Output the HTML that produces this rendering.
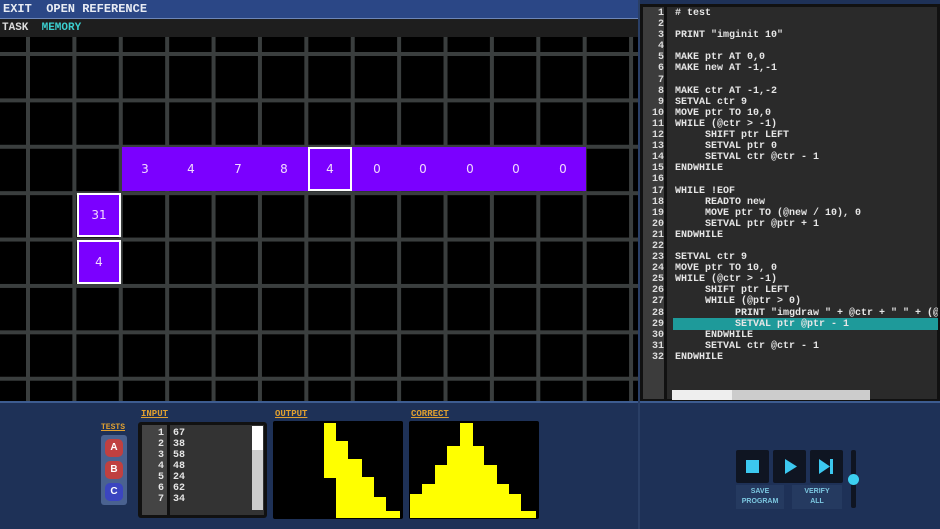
<!DOCTYPE html>
<html><head><style>
*{margin:0;padding:0;box-sizing:border-box}
body{width:940px;height:529px;overflow:hidden;background:#1e3157;font-family:"Liberation Mono",monospace;position:relative}
.abs{position:absolute}
#top{left:0;top:0;width:638px;height:19px;background:#2b4786;border-bottom:1px solid #6d86b8;color:#e8ecf4;font-size:12px;line-height:19px;padding-left:3px;font-weight:bold}
#task{left:0;top:19px;width:638px;height:18px;background:#1e1e1e;color:#ddd;font-size:11px;line-height:18px;padding-left:2px;font-weight:bold}
#grid{left:0;top:37px;width:638px;height:364px;background-color:#000;
background-image:linear-gradient(90deg,#3a3e3e 0 4px,transparent 4px),linear-gradient(180deg,#3a3e3e 0 4px,transparent 4px);
background-size:46.4px 46.4px;background-position:26px 15px;overflow:hidden}
.c{position:absolute;background:#7b00ff;color:#f2d9ff;font:12px "DejaVu Sans",sans-serif;text-align:center;line-height:44px;height:44px;width:46px}
.w{border:2px solid #fff;line-height:40px;width:44px}
#bot{left:0;top:401px;width:940px;height:128px;background:#1e3157;border-top:2px solid #3d5c90}
#ed{left:640px;top:4px;width:300px;height:398px;background:#2a2a2a;border:3px solid #111}
#gut{left:643px;top:7px;width:24px;height:392px;background:#3c3c3c;border-right:3px solid #111}
pre{font:bold 10px/11.1px "Liberation Mono",monospace;color:#e6e6e6}
.lbl{color:#e0a030;font:bold 9px "Liberation Mono",monospace;text-decoration:underline}
.btn{width:33px;height:33px;background:#0f1522;border-radius:2px}
</style></head><body>
<div id="top" class="abs">EXIT&nbsp;&nbsp;OPEN REFERENCE</div>
<div id="task" class="abs">TASK&nbsp;&nbsp;<span style="color:#3cd0d0">MEMORY</span></div>
<div id="grid" class="abs">
<div class="c" style="left:122px;top:110px;width:464px"></div>
<div class="c" style="left:122px;top:110px">3</div>
<div class="c" style="left:168px;top:110px">4</div>
<div class="c" style="left:215px;top:110px">7</div>
<div class="c" style="left:261px;top:110px">8</div>
<div class="c w" style="left:308px;top:110px">4</div>
<div class="c" style="left:354px;top:110px">0</div>
<div class="c" style="left:400px;top:110px">0</div>
<div class="c" style="left:447px;top:110px">0</div>
<div class="c" style="left:493px;top:110px">0</div>
<div class="c" style="left:540px;top:110px">0</div>
<div class="c w" style="left:77px;top:156px">31</div>
<div class="c w" style="left:77px;top:203px">4</div>
</div>
<div class="abs" style="left:638px;top:0;width:2px;height:529px;background:#2a3f66"></div>
<div id="ed" class="abs"></div>
<div id="gut" class="abs"></div>
<pre class="abs" style="left:644px;top:8px;width:20px;text-align:right;color:#ddd">1
2
3
4
5
6
7
8
9
10
11
12
13
14
15
16
17
18
19
20
21
22
23
24
25
26
27
28
29
30
31
32</pre>
<div class="abs" style="left:673px;top:318px;width:265px;height:12px;background:#1e9a9a"></div>
<pre class="abs" style="left:675px;top:8px;width:263px;overflow:hidden"># test

PRINT "imginit 10"

MAKE ptr AT 0,0
MAKE new AT -1,-1

MAKE ctr AT -1,-2
SETVAL ctr 9
MOVE ptr TO 10,0
WHILE (@ctr > -1)
     SHIFT ptr LEFT
     SETVAL ptr 0
     SETVAL ctr @ctr - 1
ENDWHILE

WHILE !EOF
     READTO new
     MOVE ptr TO (@new / 10), 0
     SETVAL ptr @ptr + 1
ENDWHILE

SETVAL ctr 9
MOVE ptr TO 10, 0
WHILE (@ctr > -1)
     SHIFT ptr LEFT
     WHILE (@ptr > 0)
          PRINT "imgdraw " + @ctr + " " + (@ptr
          SETVAL ptr @ptr - 1
     ENDWHILE
     SETVAL ctr @ctr - 1
ENDWHILE</pre>
<div class="abs" style="left:672px;top:390px;width:198px;height:10px;background:#ccc"></div>
<div class="abs" style="left:672px;top:390px;width:60px;height:10px;background:#eee"></div>
<div id="bot" class="abs"></div>
<div class="abs" style="left:638px;top:401px;width:2px;height:128px;background:#2a3f66"></div>
<div class="abs lbl" style="left:101px;top:423px;font-size:8px">TESTS</div>
<div class="abs" style="left:101px;top:435px;width:26px;height:70px;background:#4a6290;border-radius:3px"></div>
<div class="abs" style="left:105px;top:439px;width:18px;height:18px;border-radius:5px;background:#c04040;color:#fff;font:bold 10px/18px sans-serif;text-align:center">A</div>
<div class="abs" style="left:105px;top:461px;width:18px;height:18px;border-radius:5px;background:#c04040;color:#fff;font:bold 10px/18px sans-serif;text-align:center">B</div>
<div class="abs" style="left:105px;top:483px;width:18px;height:18px;border-radius:5px;background:#3b45c0;color:#fff;font:bold 10px/18px sans-serif;text-align:center">C</div>
<div class="abs lbl" style="left:141px;top:409px">INPUT</div>
<div class="abs" style="left:138px;top:422px;width:129px;height:96px;background:#111;border-radius:3px"></div>
<div class="abs" style="left:142px;top:425px;width:25px;height:90px;background:#444"></div>
<div class="abs" style="left:170px;top:425px;width:94px;height:90px;background:#333"></div>
<div class="abs" style="left:252px;top:426px;width:11px;height:84px;background:#ccc"></div>
<div class="abs" style="left:252px;top:426px;width:11px;height:24px;background:#fff"></div>
<pre class="abs" style="left:146px;top:428px;width:18px;text-align:right;line-height:11px">1
2
3
4
5
6
7</pre>
<pre class="abs" style="left:173px;top:428px;line-height:11px">67
38
58
48
24
62
34</pre>
<div class="abs lbl" style="left:275px;top:409px">OUTPUT</div>
<svg class="abs" style="left:273px;top:421px" width="130" height="98"><rect width="130" height="98" fill="#000" rx="2"/>
<polygon fill="#ff0" points="51,2 63,2 63,20 75,20 75,38 89,38 89,56 101,56 101,76 113,76 113,90 127,90 127,97 63,97 63,57 51,57"/></svg>
<div class="abs lbl" style="left:411px;top:409px">CORRECT</div>
<svg class="abs" style="left:409px;top:421px" width="130" height="98"><rect width="130" height="98" fill="#000" rx="2"/>
<polygon fill="#ff0" points="1,97 1,73 13,73 13,63 26,63 26,44 38,44 38,25 51,25 51,2 64,2 64,25 75,25 75,44 88,44 88,63 100,63 100,73 112,73 112,90 127,90 127,97"/></svg>
<div class="abs btn" style="left:736px;top:450px"></div>
<div class="abs" style="left:746px;top:460px;width:13px;height:13px;background:#3cc8f0"></div>
<div class="abs btn" style="left:773px;top:450px"></div>
<svg class="abs" style="left:773px;top:450px" width="33" height="33"><polygon points="12,9 24,16.5 12,24" fill="#3cc8f0"/></svg>
<div class="abs btn" style="left:810px;top:450px"></div>
<svg class="abs" style="left:810px;top:450px" width="33" height="33"><polygon points="9,9 20,16.5 9,24" fill="#3cc8f0"/><rect x="20" y="9" width="3" height="15" fill="#3cc8f0"/></svg>
<div class="abs" style="left:736px;top:485px;width:48px;height:24px;background:#253a60;color:#7cc7e0;font:bold 7px/10px sans-serif;text-align:center;padding-top:2px">SAVE<br>PROGRAM</div>
<div class="abs" style="left:792px;top:485px;width:50px;height:24px;background:#253a60;color:#7cc7e0;font:bold 7px/10px sans-serif;text-align:center;padding-top:2px">VERIFY<br>ALL</div>
<div class="abs" style="left:851px;top:450px;width:5px;height:58px;background:#0f1522;border-radius:2px"></div>
<div class="abs" style="left:848px;top:474px;width:11px;height:11px;border-radius:50%;background:#3cd0f0"></div>
</body></html>
